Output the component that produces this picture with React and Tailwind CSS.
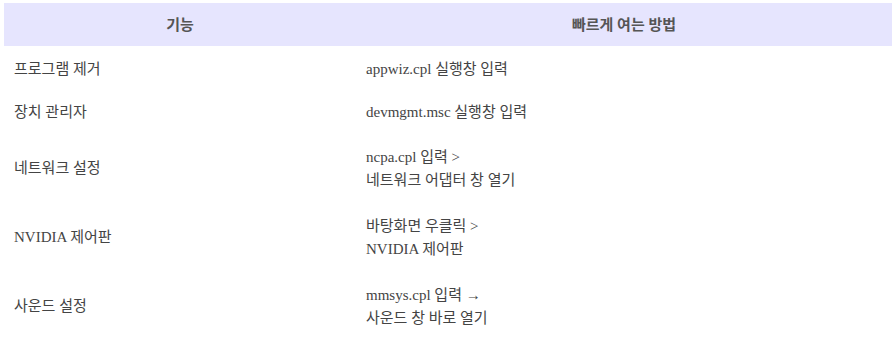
import React from 'react';

const rows = [
  { name: '프로그램 제거', how: ['appwiz.cpl 실행창 입력'] },
  { name: '장치 관리자', how: ['devmgmt.msc 실행창 입력'] },
  { name: '네트워크 설정', how: ['ncpa.cpl 입력 >', '네트워크 어댑터 창 열기'] },
  { name: 'NVIDIA 제어판', how: ['바탕화면 우클릭 >', 'NVIDIA 제어판'] },
  { name: '사운드 설정', how: ['mmsys.cpl 입력 →', '사운드 창 바로 열기'] },
];

const App = () => {
  return (
    <div
      className="w-[896px] h-[341px] bg-white pt-[3px] px-[4px] text-[15px] text-[#444]"
      style={{ fontFamily: '"Liberation Serif", "Noto Sans CJK KR", serif' }}
    >
      <div className="grid grid-cols-[352px_1fr] h-[43px] pt-[2px] bg-[#e6e5fe] font-bold text-[#555]">
        <div className="flex items-center justify-center">기능</div>
        <div className="flex items-center justify-center">빠르게 여는 방법</div>
      </div>
      {rows.map(row => (
        <div
          key={row.name}
          className={`grid grid-cols-[352px_1fr] pt-[4px] ${row.how.length > 1 ? 'h-[69px]' : 'h-[43px]'}`}
        >
          <div className="flex items-center px-[10px]">{row.name}</div>
          <div className="flex flex-col justify-center pl-[10px] leading-[23px]">
            {row.how.map(line => (
              <div key={line}>{line}</div>
            ))}
          </div>
        </div>
      ))}
    </div>
  );
};

export default App;
